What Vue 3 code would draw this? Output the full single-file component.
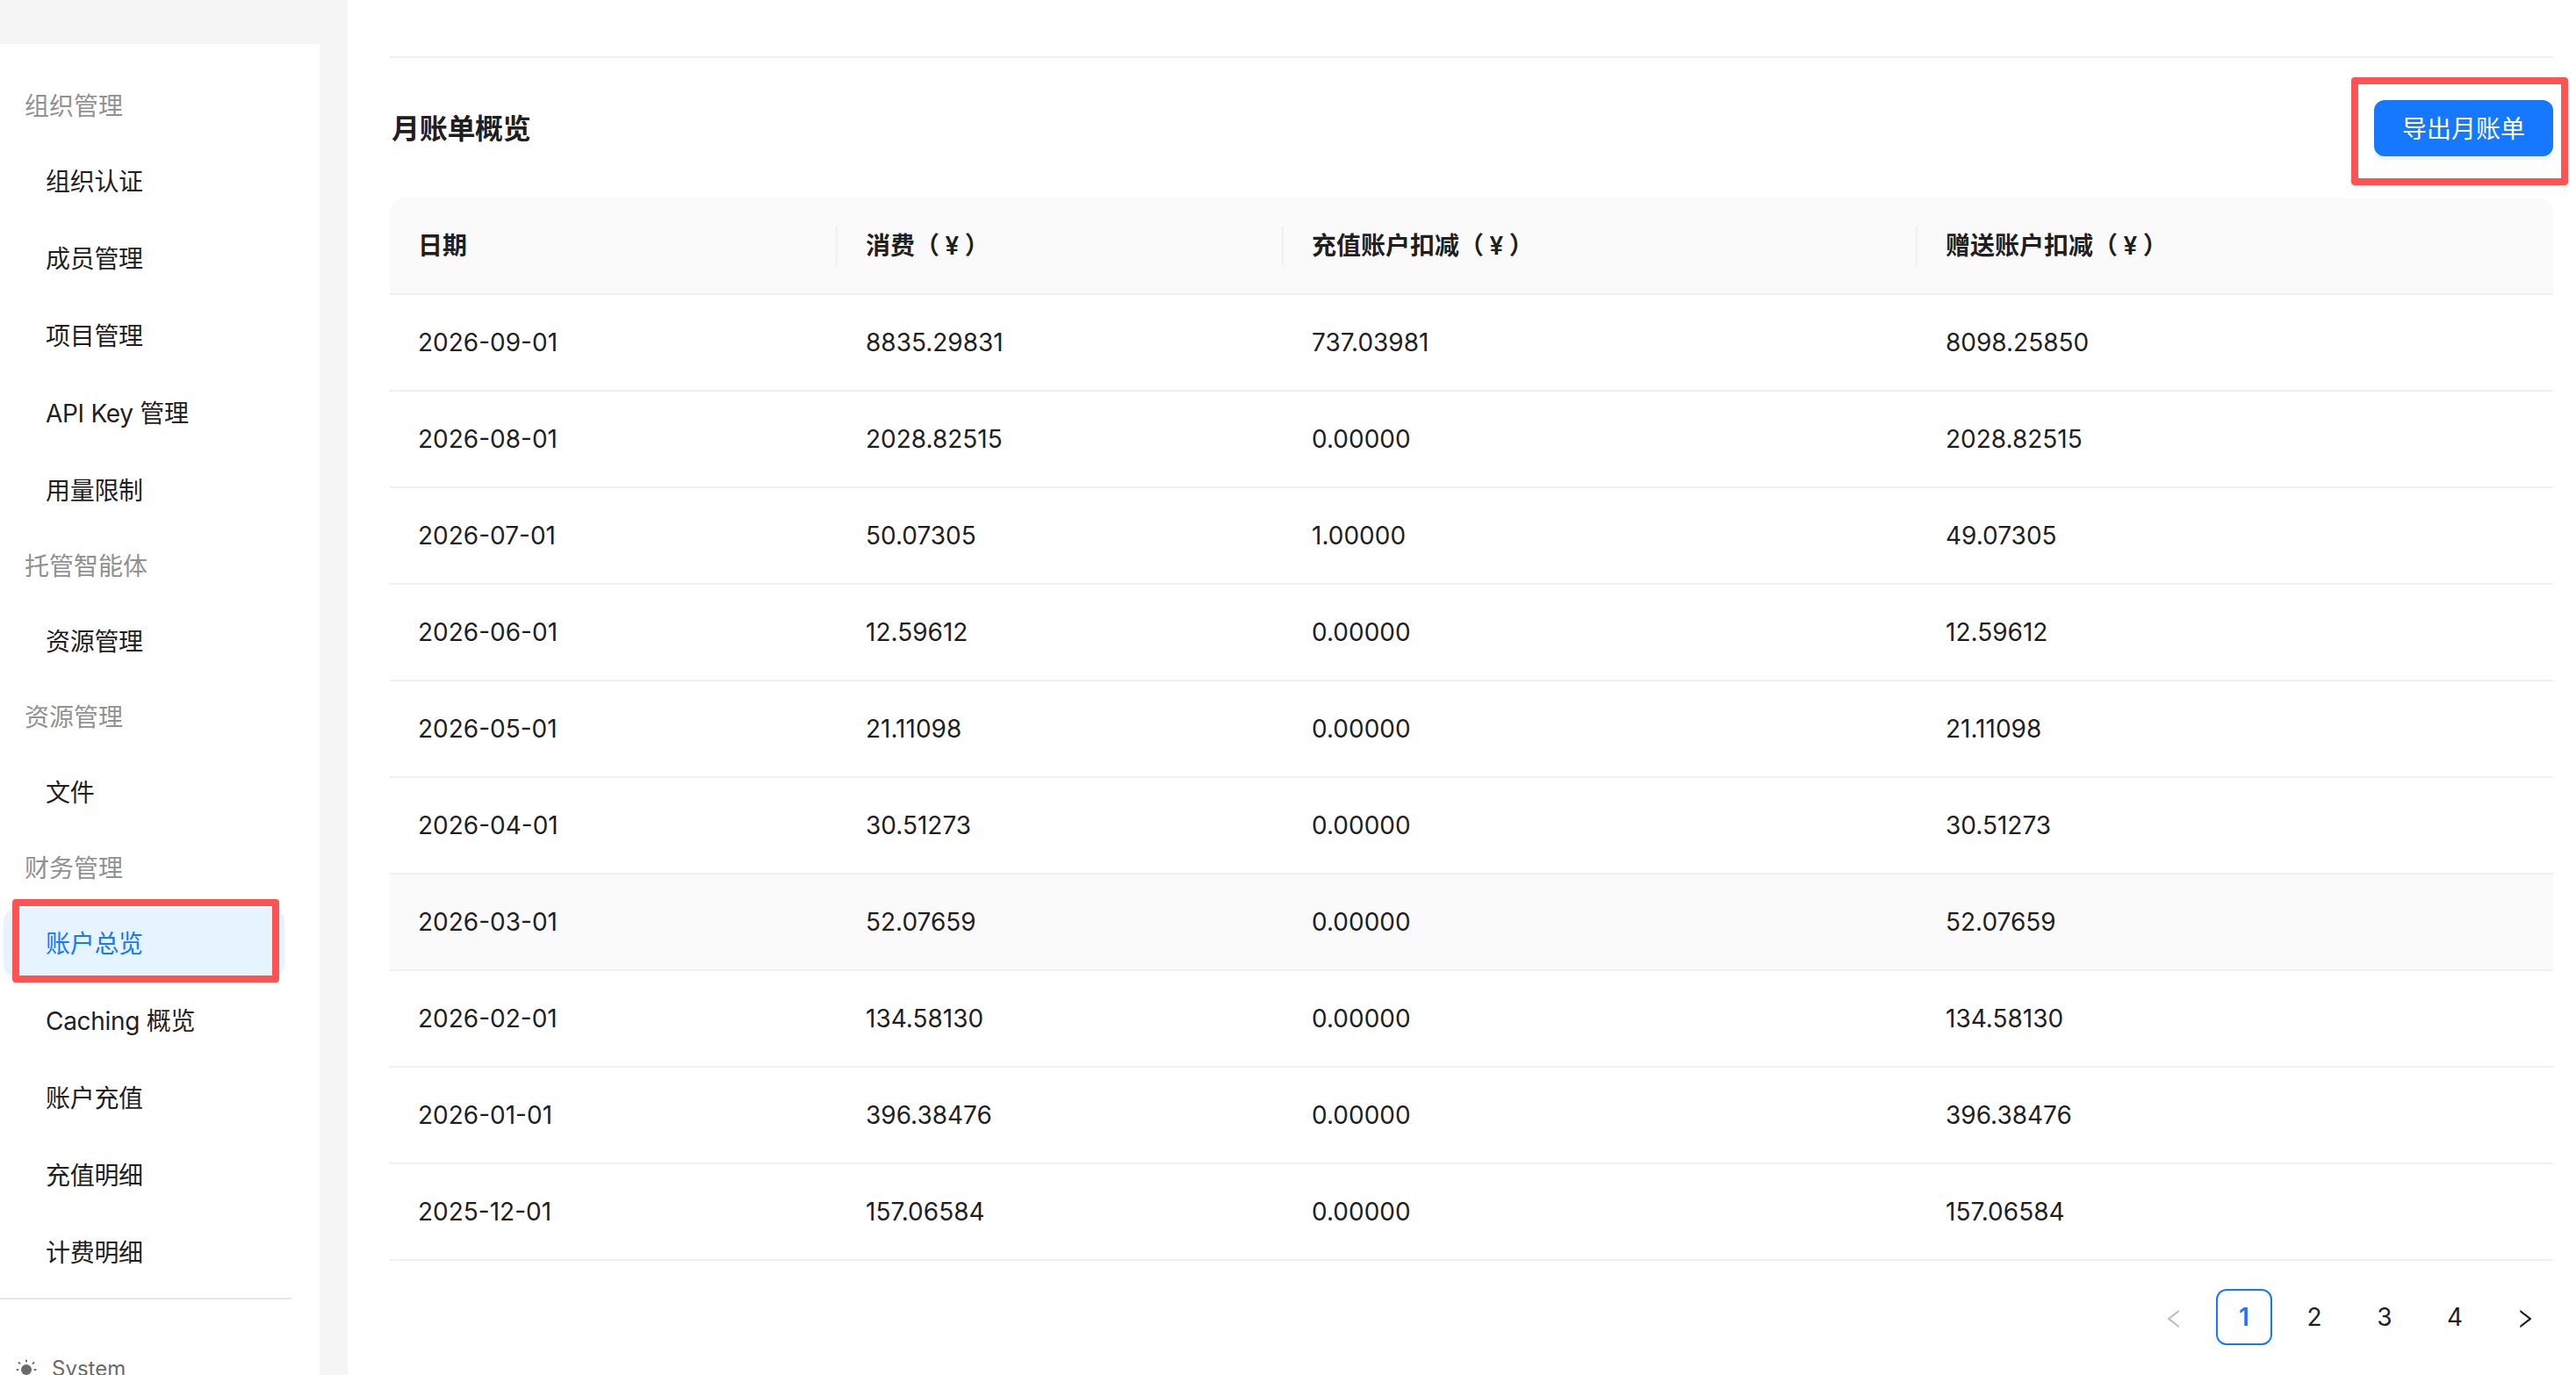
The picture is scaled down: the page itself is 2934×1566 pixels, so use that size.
<script setup>
const rows = [
  ['2026-09-01', '8835.29831', '737.03981', '8098.25850'],
  ['2026-08-01', '2028.82515', '0.00000', '2028.82515'],
  ['2026-07-01', '50.07305', '1.00000', '49.07305'],
  ['2026-06-01', '12.59612', '0.00000', '12.59612'],
  ['2026-05-01', '21.11098', '0.00000', '21.11098'],
  ['2026-04-01', '30.51273', '0.00000', '30.51273'],
  ['2026-03-01', '52.07659', '0.00000', '52.07659'],
  ['2026-02-01', '134.58130', '0.00000', '134.58130'],
  ['2026-01-01', '396.38476', '0.00000', '396.38476'],
  ['2025-12-01', '157.06584', '0.00000', '157.06584'],
]
const hoverIndex = 6

const groups = [
  { title: '组织管理', items: ['组织认证', '成员管理', '项目管理', 'API Key 管理', '用量限制'] },
  { title: '托管智能体', items: ['资源管理'] },
  { title: '资源管理', items: ['文件'] },
  { title: '财务管理', items: ['账户总览', 'Caching 概览', '账户充值', '充值明细', '计费明细'] },
]
const activeItem = '账户总览'
const pages = [1, 2, 3, 4]
</script>

<template>
  <div class="page">
    <aside class="side">
      <div class="panel">
        <nav class="nav">
          <template v-for="group in groups" :key="group.title">
            <div class="nav-title">{{ group.title }}</div>
            <a
              v-for="item in group.items"
              :key="item"
              class="nav-item"
              :class="{ active: item === activeItem }"
            >
              {{ item }}
              <span v-if="item === activeItem" class="mark mark-nav"></span>
            </a>
          </template>
        </nav>
        <div class="theme">
          <svg class="sun" viewBox="0 0 28 28" fill="#6b6b6b">
            <circle cx="14" cy="15" r="6" />
            <path
              d="M14 4.500v1M5.500 7l1 .8M22.500 7l-1 .8M3.500 15h1M23.500 15h1"
              stroke="#6b6b6b"
              stroke-width="2"
              stroke-linecap="round"
            />
          </svg>
          <span>System</span>
        </div>
      </div>
    </aside>

    <main class="main">
      <section class="section">
        <div class="head">
          <h2 class="title">月账单概览</h2>
          <div class="export">
            <button class="btn">导出月账单</button>
            <span class="mark mark-btn"></span>
          </div>
        </div>

        <table class="table">
          <colgroup>
            <col style="width: 510px" />
            <col style="width: 508px" />
            <col style="width: 722px" />
            <col />
          </colgroup>
          <thead>
            <tr>
              <th>日期</th>
              <th>消费（<span class="yen">¥</span>）</th>
              <th>充值账户扣减（<span class="yen">¥</span>）</th>
              <th>赠送账户扣减（<span class="yen">¥</span>）</th>
            </tr>
          </thead>
          <tbody>
            <tr v-for="(row, i) in rows" :key="row[0]" :class="{ hover: i === hoverIndex }">
              <td v-for="(cell, j) in row" :key="j">{{ cell }}</td>
            </tr>
          </tbody>
        </table>

        <div class="pager">
          <span class="pg pg-arrow disabled">
            <svg viewBox="64 64 896 896" fill="currentColor">
              <path d="M724 218.300V141c0-6.700-7.700-10.400-12.900-6.300L260.300 486.800a31.860 31.860 0 0 0 0 50.300l450.800 352.100c5.300 4.100 12.900.4 12.900-6.300v-77.300c0-4.900-2.300-9.600-6.100-12.600l-360-281 360-281.100c3.800-3 6.100-7.700 6.100-12.600z" />
            </svg>
          </span>
          <span v-for="p in pages" :key="p" class="pg" :class="{ current: p === 1 }">{{ p }}</span>
          <span class="pg pg-arrow">
            <svg viewBox="64 64 896 896" fill="currentColor">
              <path d="M765.700 486.800L314.900 134.700A7.970 7.970 0 0 0 302 141v77.300c0 4.900 2.300 9.600 6.100 12.600l360.100 281.100-360.100 281.100c-3.900 3-6.100 7.700-6.100 12.600V883c0 6.700 7.700 10.400 12.900 6.300l450.800-352.100a31.960 31.960 0 0 0 0-50.400z" />
            </svg>
          </span>
        </div>
      </section>
    </main>
  </div>
</template>

<style>
html, body {
  margin: 0;
  background: #fff;
}
</style>

<style scoped>
.page {
  display: flex;
  height: 1566px;
  overflow: hidden;
  font-family: Inter, "Noto Sans CJK SC", sans-serif;
  font-size: 28px;
  color: #1f1f1f;
  background: #fff;
}

.side {
  width: 396px;
  flex: none;
  padding-top: 50px;
  box-sizing: border-box;
  background: #f5f5f5;
}

.panel {
  width: 364px;
  height: 100%;
  background: #fff;
}

.nav {
  width: 332px;
  padding: 32px 8px 12px 4px;
  box-sizing: border-box;
  display: flex;
  flex-direction: column;
  gap: 8px;
  border-bottom: 2px solid #e6e6e6;
}

.nav-title {
  height: 76px;
  line-height: 78px;
  padding-left: 24px;
  color: #919191;
}

.nav-item {
  position: relative;
  height: 80px;
  line-height: 82px;
  padding-left: 48px;
  border-radius: 16px;
  letter-spacing: -0.3px;
}

.nav-item.active {
  background: #e6f4ff;
  color: #1677ff;
}

/* red annotation boxes drawn over the screenshot */
.mark {
  position: absolute;
  border: 8px solid #ff5252;
  border-radius: 4px;
  box-sizing: border-box;
  pointer-events: none;
}

.mark-nav {
  left: 10px;
  right: 6px;
  top: -10px;
  bottom: -5px;
}

.mark-btn {
  left: -26px;
  right: -17px;
  top: -26px;
  bottom: -33px;
}

.theme {
  display: flex;
  align-items: center;
  gap: 15px;
  padding: 64px 0 0 16px;
  color: #6b6b6b;
  font-size: 24px;
}

.sun {
  width: 28px;
  height: 28px;
}

.main {
  flex: 1;
  min-width: 0;
  padding: 64px 26px 0 48px;
}

.section {
  border-top: 2px solid #f0f0f0;
}

.head {
  display: flex;
  align-items: center;
  justify-content: space-between;
  margin: 48px 0;
}

.title {
  margin: 0;
  padding: 0 0 4px 2px;
  font-size: 32px;
  font-weight: 600;
  letter-spacing: -0.3px;
}

.export {
  position: relative;
}

.btn {
  display: block;
  width: 204px;
  height: 64px;
  padding: 0 0 2px;
  border: 0;
  border-radius: 12px;
  background: #1677ff;
  box-shadow: 0 4px 0 rgba(5, 145, 255, 0.1);
  color: #fff;
  font: inherit;
}

.table {
  width: 100%;
  table-layout: fixed;
  border-collapse: separate;
  border-spacing: 0;
}

.table th,
.table td {
  padding: 0 32px;
  text-align: left;
  border-bottom: 2px solid #f0f0f0;
}

.table th {
  position: relative;
  height: 110px;
  box-sizing: border-box;
  padding-bottom: 4px;
  background: #fafafa;
  font-weight: 600;
}

.yen {
  margin: 0 6.500px;
}

.table th:first-child {
  border-top-left-radius: 16px;
}

.table th:last-child {
  border-top-right-radius: 16px;
}

.table th:not(:last-child)::after {
  content: '';
  position: absolute;
  right: 0;
  top: 31px;
  width: 2px;
  height: 46px;
  background: #f0f0f0;
}

.table td {
  height: 110px;
  box-sizing: border-box;
}

.table tr.hover td {
  background: #fafafa;
}

.pager {
  display: flex;
  justify-content: flex-end;
  gap: 16px;
  margin-top: 32px;
}

.pg {
  width: 64px;
  height: 64px;
  box-sizing: border-box;
  display: flex;
  align-items: center;
  justify-content: center;
  border-radius: 12px;
}

.pg svg {
  width: 24px;
  height: 24px;
  margin-top: 4px;
}

.pg.disabled {
  color: rgba(0, 0, 0, 0.25);
}

.pg.current {
  border: 2px solid #1677ff;
  color: #1677ff;
  font-weight: 600;
}
</style>
